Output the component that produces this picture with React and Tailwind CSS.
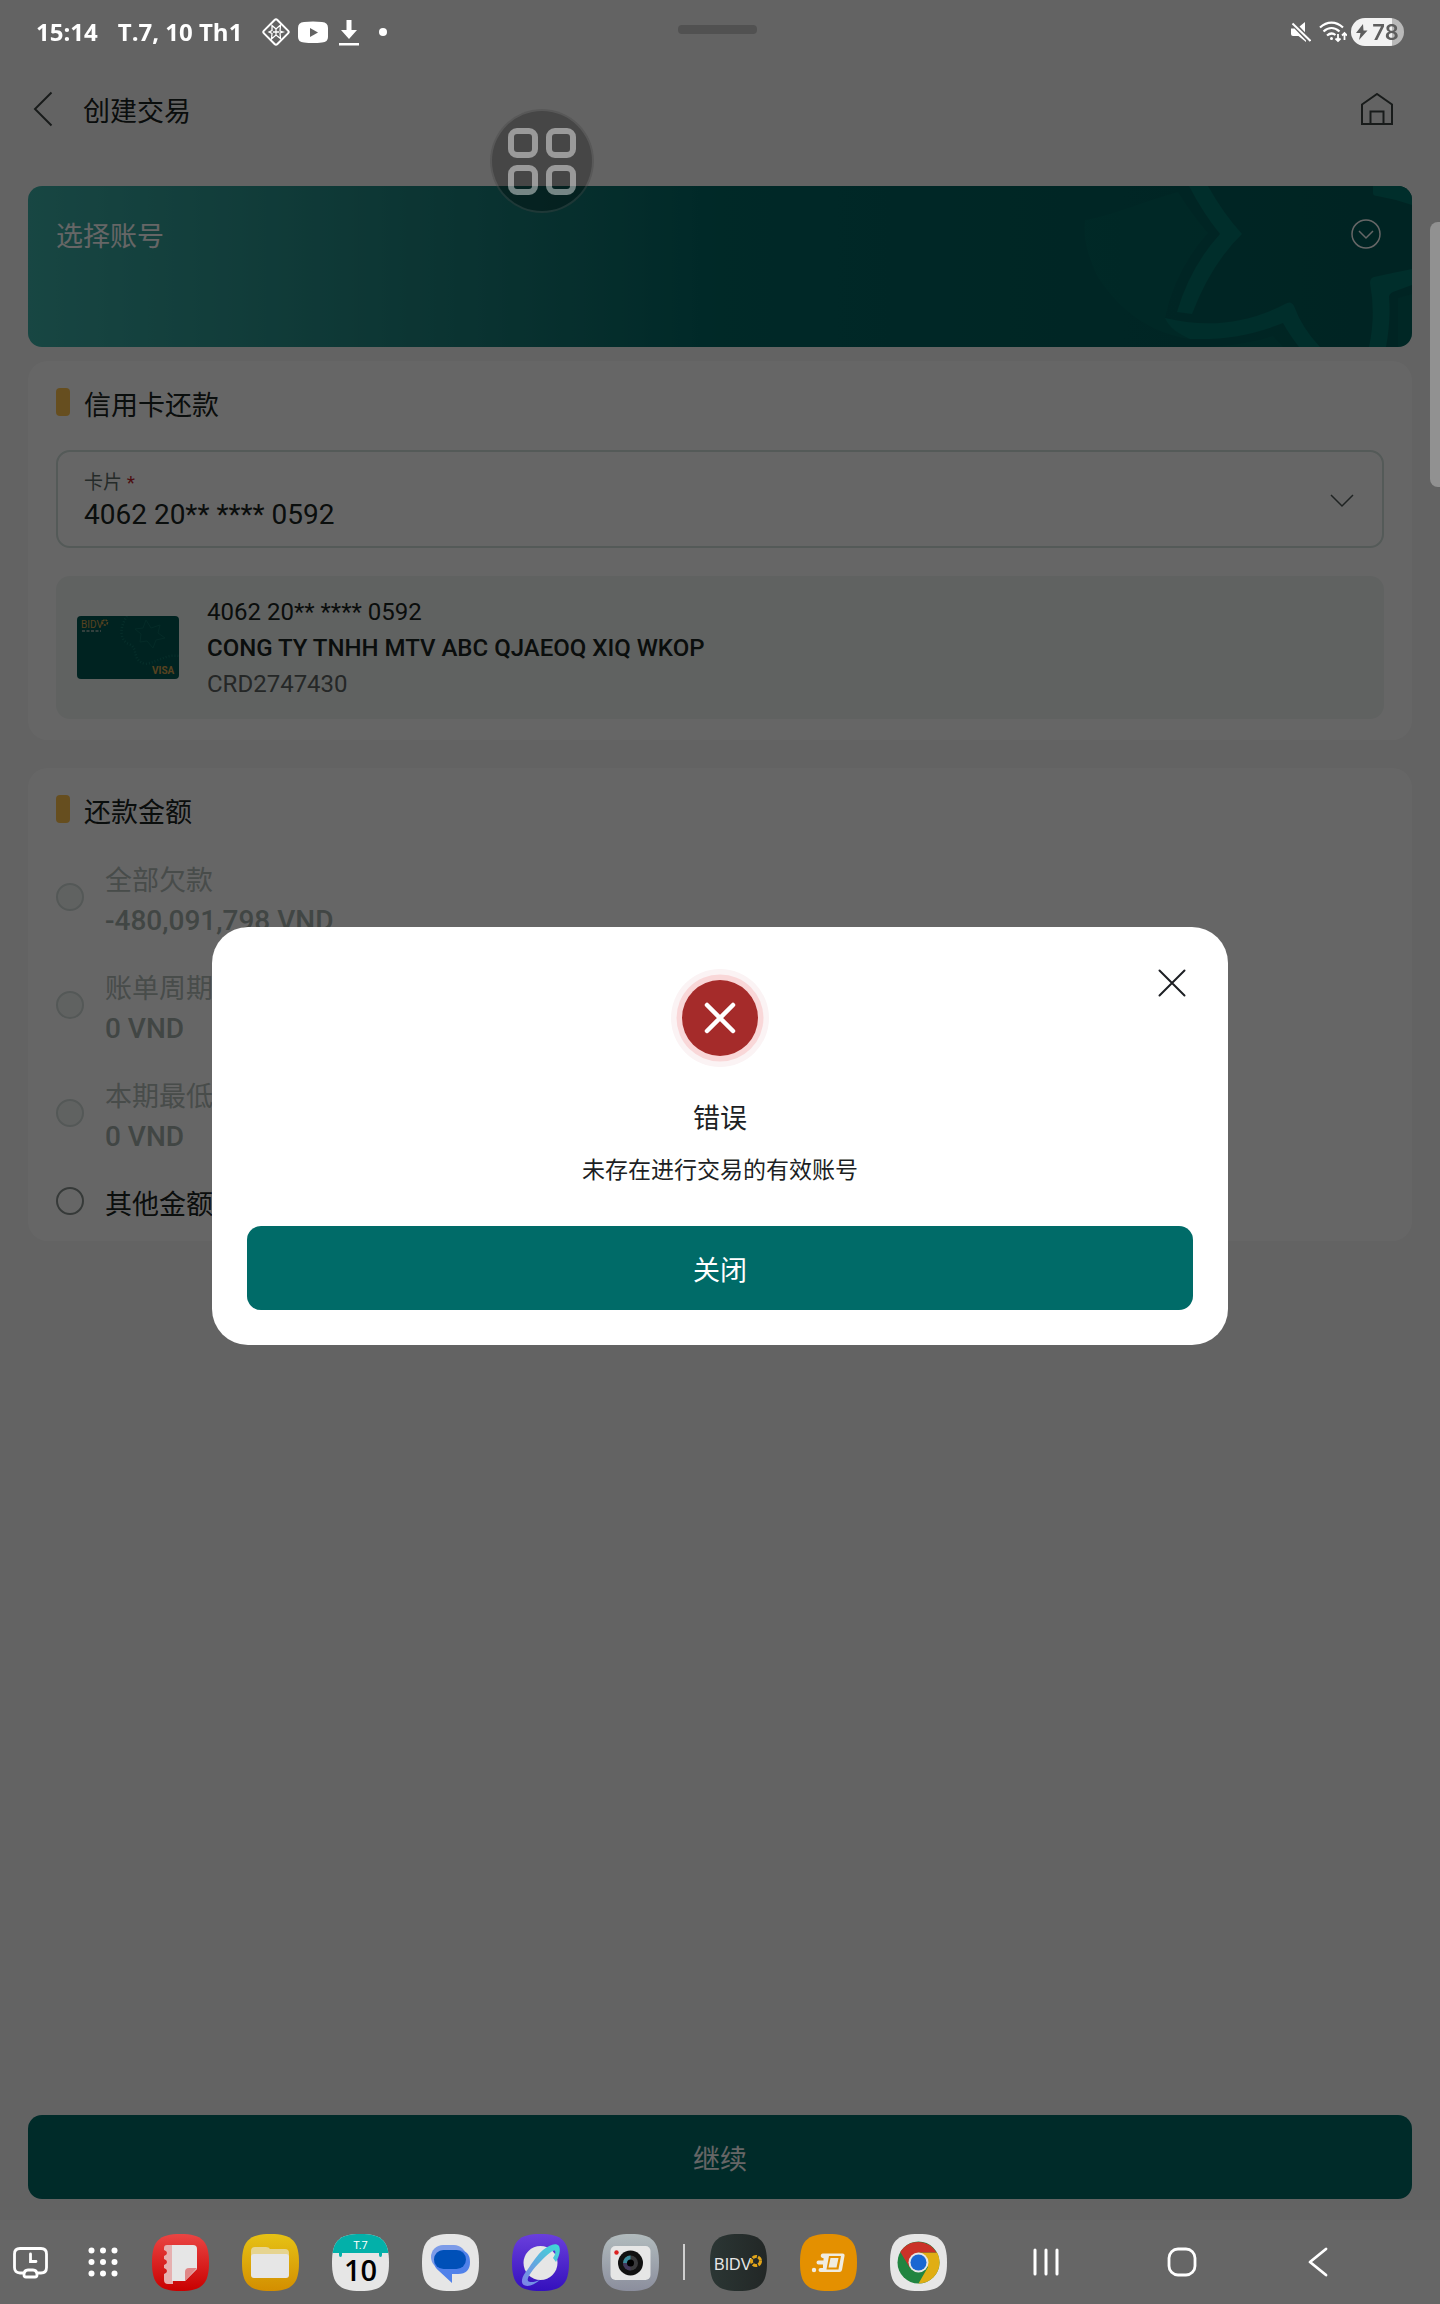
import React, { useState } from "react";

const OPTIONS = [
  { id: "all", label: "全部欠款", amount: "-480,091,798 VND", disabled: true },
  { id: "cycle", label: "账单周期欠款", amount: "0 VND", disabled: true },
  { id: "min", label: "本期最低还款", amount: "0 VND", disabled: true },
  { id: "other", label: "其他金额", disabled: false },
];

const StatusBar = () => (
  <div className="relative z-20 flex h-16 items-center justify-between px-9 text-white">
    <div className="flex items-center font-['Open_Sans',sans-serif] text-[24px] leading-8 font-bold">
      <span>15:14</span>
      <span className="ml-5">T.7, 10 Th1</span>
      <svg className="ml-5 h-7 w-7" viewBox="0 0 28 28" fill="none" stroke="white" strokeWidth="2">
        <rect x="4.500" y="4.500" width="19" height="19" rx="2" transform="rotate(45 14 14)" />
        <path
          d="M10 7.500 14 11l4.500-4-.5 6 3 1-3 1 .5 5.500L14 17l-4.500 4 .5-5.500L7 14l3-1.500zM14 11v6M11 14h6"
          strokeWidth="1.300"
        />
      </svg>
      <svg className="ml-2 h-7 w-[30px]" viewBox="0 0 30 28">
        <path d="M6 4Q15 3 24 4q6 .5 6 6v9q0 5-6 5.500-9 1-18 0-6-.5-6-5.500v-9Q0 4.500 6 4z" fill="white" />
        <path d="M12 10v9l8-4.500z" fill="#636363" />
      </svg>
      <svg className="ml-[11px] h-7 w-5" viewBox="0 0 20 28" fill="white">
        <path d="M7.500 2h5v10H18L10 21 2 12h5.500zM0 25h20v2.500H0z" />
      </svg>
      <span className="ml-5 h-2 w-2 rounded-full bg-white" />
    </div>
    <div className="flex items-center">
      <svg className="h-5 w-5" viewBox="0 0 20 20" fill="white">
        <path d="M0 6.500h3.500L15 18.500V20L7.500 14H2a2 2 0 0 1-2-2zM8.500 4.500 14 0v10.200z" />
        <path d="M1.500 1.500l18 17.500" stroke="white" strokeWidth="2" />
      </svg>
      <svg className="ml-2 h-6 w-7" viewBox="0 0 28 24" fill="none" stroke="white" strokeWidth="2.200">
        <path d="M1 7.500C8 1 17 1 24 7.500M4.500 11.500c5-4.500 11-4.500 16 0M8 15.500c3-2.500 6-2.500 8.500-.5" />
        <circle cx="12.500" cy="18.500" r="1.500" fill="white" stroke="none" />
        <path d="M19 14v7m-2.500-2.500L19 21l2.500-2.500M25.500 20v-7M23 15.500l2.500-2.500 2.500 2.500" strokeWidth="1.800" />
      </svg>
      <div className="ml-1 flex h-7 w-[53px] items-center justify-center rounded-full bg-linear-to-r from-[#f2f2f2] from-78% to-[#b9b9b9] to-78% text-[#5e5e5e]">
        <svg className="h-4 w-3" viewBox="0 0 12 16" fill="currentColor">
          <path d="M7 0 0 9h4.500L3 16l8.500-9.500H7.500z" />
        </svg>
        <span className="ml-1 font-['Inter',sans-serif] text-[22px] leading-7 font-semibold">78</span>
      </div>
    </div>
    <span className="absolute top-[25px] left-[678px] h-[9px] w-[79px] rounded-[4px] bg-[#515151]" />
  </div>
);

const Header = () => (
  <header className="flex h-[122px] items-start justify-between pt-[23px] pr-[45px] pl-[27px]">
    <div className="flex items-start">
      <button className="flex h-11 w-8 items-center justify-center" aria-label="返回">
        <svg className="h-9 w-5" viewBox="0 0 20 36" fill="none" stroke="#3d4543" strokeWidth="2">
          <path d="M18.500 1.500 2 18l16.500 16.500" />
        </svg>
      </button>
      <h1 className="ml-6 pt-[5px] text-[27px] leading-10">创建交易</h1>
    </div>
    <button className="flex h-11 w-9 items-center justify-center" aria-label="首页">
      <svg className="h-8 w-8" viewBox="0 0 32 32" fill="none" stroke="#3d4543" strokeWidth="2">
        <path d="M1 11.500 16 1l15 10.500V31H1zM9.500 31V18.500h13V31" />
      </svg>
    </button>
  </header>
);

const AccountBanner = () => (
  <button className="relative flex h-[161px] w-full items-start justify-between overflow-hidden rounded-[14px] bg-linear-to-r from-[#3cafa7] via-[#006663] via-50% to-[#005a57] px-7 pt-[31px] text-left">
    <svg className="absolute top-0 right-0 h-[161px] w-[355px]" viewBox="0 0 355 161" fill="#00736b">
      <path
        d="M28 34C60 28 90 14 121 6Q136 30 151 47 118 84 108 132 128 139 150 141L133 153C90 147 60 121 40 90 28 64 26 47 28 34z"
        opacity="0.300"
      />
      <path d="M132 0h19Q166 27 185 48 154 78 135 128L120 126Q133 81 163 48 146 27 132 0z" />
      <path d="M108 132c42 10 82 6 120-14q6-4 9 2 8 22 26 41h-21Q232 148 226 137C196 149 170 154 133 153 122 148 112 142 108 132z" />
      <path d="M150 161q40-2 66-11l10 11zM341 112l14-4v53h-14z" opacity="0.300" />
      <path d="M316 0v7q0 3 4 3 18 3 35 9V0zM355 83q-20 4-38 8-4 1-4 6 6 32-1 64h17q5-27 3-50 0-3 4-5l19-7z" />
    </svg>
    <span className="relative text-[27px] leading-10 text-white">选择账号</span>
    <svg className="relative mt-0.5 mr-[3px] h-[30px] w-[30px]" viewBox="0 0 30 30" fill="none" stroke="white" strokeWidth="1.500">
      <circle cx="15" cy="15" r="14" />
      <path d="m8 12 7 7 7-7" />
    </svg>
  </button>
);

const SectionTitle = ({ children }) => (
  <div className="flex items-start">
    <span className="h-7 w-3.5 rounded-[4px] bg-[#ffc34f]" />
    <h2 className="ml-3.5 text-[27px] leading-9">{children}</h2>
  </div>
);

const BankCard = () => (
  <svg className="h-16 w-[102px] shrink-0" viewBox="0 0 102 64">
    <rect width="102" height="63" rx="4" fill="#005853" />
    <path
      d="M50 0C41 14 44 25 52 28 62 32 54 44 68 48 82 46 88 38 102 40"
      fill="none"
      stroke="#0f7268"
      strokeWidth="2.500"
      strokeDasharray="1 2"
    />
    <path
      d="M69 4l5 8 9-3-2 8 7 5-9 2-3 8-6-7-7 1 1-8-6-5 8-1z"
      fill="none"
      stroke="#0c6b62"
      strokeWidth="1"
    />
    <text x="4" y="12" fontSize="10" fill="#d9a650" fontFamily="Roboto, sans-serif">BIDV</text>
    <circle cx="28" cy="6.500" r="2.500" fill="none" stroke="#d9a650" strokeWidth="1.500" strokeDasharray="2 1" />
    <path d="M5 15h19" stroke="#a8b8b0" strokeWidth="1.500" strokeDasharray="3 1.500" />
    <text x="75" y="58" fontSize="10" fontWeight="700" fill="#d9a650" fontFamily="Roboto, sans-serif">VISA</text>
  </svg>
);

const CardSection = () => (
  <section className="mt-3.5 rounded-[20px] bg-white px-7 pt-[27px] pb-[21px]">
    <SectionTitle>信用卡还款</SectionTitle>
    <div className="mt-[26px] flex h-[98px] items-center rounded-[14px] border-2 border-[#d2e0dc] pt-1 pr-7 pl-[26px]">
      <div className="flex-1">
        <label htmlFor="card" className="block text-[19px] leading-7 text-[#5c6b67]">
          卡片 <span className="text-[#c0272d]">*</span>
        </label>
        <select id="card" className="block h-9 w-full appearance-none bg-transparent text-[28px] leading-9">
          <option>4062 20** **** 0592</option>
        </select>
      </div>
      <svg className="h-3.5 w-6" viewBox="0 0 24 14" fill="none" stroke="#4f5956" strokeWidth="1.500">
        <path d="m1 1 11 11L23 1" />
      </svg>
    </div>
    <div className="mt-7 flex h-[143px] items-center rounded-[14px] bg-[#f0f5f3] pl-[21px]">
      <BankCard />
      <div className="ml-7 text-[24px] leading-9">
        <p>4062 20** **** 0592</p>
        <p className="font-medium">CONG TY TNHH MTV ABC QJAEOQ XIQ WKOP</p>
        <p className="text-[#5c6361]">CRD2747430</p>
      </div>
    </div>
  </section>
);

const AmountSection = () => {
  const [selected, setSelected] = useState("");

  return (
    <section className="mt-7 rounded-[20px] bg-white px-7 pt-[27px] pb-4">
      <SectionTitle>还款金额</SectionTitle>
      <div className="mt-[22px] flex flex-col gap-5">
        {OPTIONS.map((option) => (
          <label key={option.id} className="flex items-center gap-[21px]">
            <input
              type="radio"
              name="amount"
              value={option.id}
              disabled={option.disabled}
              checked={selected === option.id}
              onChange={() => setSelected(option.id)}
              className="h-7 w-7 appearance-none rounded-full border-2 border-[#88918e] checked:border-8 disabled:border-[#d2dcd9] disabled:bg-[#f0f5f3]"
            />
            {option.amount ? (
              <span className="pt-2 leading-10 text-[#a3aeab]">
                <span className="block text-[27px] text-[#b3bdba]">{option.label}</span>
                <span className="block text-[28px] font-medium">{option.amount}</span>
              </span>
            ) : (
              <span className="pt-2 text-[27px] leading-10">{option.label}</span>
            )}
          </label>
        ))}
      </div>
    </section>
  );
};

const ErrorDialog = ({ onClose }) => (
  <div className="fixed inset-0 z-10 flex items-center justify-center bg-black/60 pb-8">
    <div
      role="dialog"
      aria-labelledby="dialog-title"
      className="relative flex w-[1016px] max-w-[90%] flex-col items-center rounded-[36px] bg-white px-[35px] pt-[42px] pb-[35px] text-[#1d1f24]"
    >
      <button
        onClick={onClose}
        aria-label="关闭窗口"
        className="absolute top-10 right-10 flex h-8 w-8 items-center justify-center"
      >
        <svg className="h-7 w-7" viewBox="0 0 28 28" fill="none" stroke="#1d1f24" strokeWidth="2" strokeLinecap="round">
          <path d="m1.500 1.500 25 25M26.500 1.500l-25 25" />
        </svg>
      </button>
      <svg className="h-[98px] w-[98px]" viewBox="0 0 98 98">
        <circle cx="49" cy="49" r="49" fill="#fbf3f4" />
        <circle cx="49" cy="49" r="43.500" fill="#f9d7d8" />
        <circle cx="49" cy="49" r="38" fill="#a52b2a" />
        <path d="m36 36 26 26M62 36 36 62" stroke="white" strokeWidth="4.500" strokeLinecap="round" />
      </svg>
      <h2 id="dialog-title" className="mt-8 text-[27px] leading-10">错误</h2>
      <p className="mt-3.5 text-[23px] leading-9">未存在进行交易的有效账号</p>
      <button onClick={onClose} className="mt-[37px] h-[84px] w-full rounded-[14px] bg-[#006b68] pt-1.5 text-[27px] text-white">
        关闭
      </button>
    </div>
  </div>
);

// Rounded "squircle" tile shared by all dock apps
const TILE = "M28.500 0C50 0 57 7 57 28.500S50 57 28.500 57 0 50 0 28.500 7 0 28.500 0z";

const AppIcon = ({ label, fill, children }) => (
  <button aria-label={label} className="h-[57px] w-[57px] shrink-0">
    <svg className="h-[57px] w-[57px]" viewBox="0 0 57 57">
      <defs>
        <linearGradient id="notes" x2="0" y2="1"><stop stopColor="#ea4543" /><stop offset="1" stopColor="#c90000" /></linearGradient>
        <linearGradient id="files" x2="0" y2="1"><stop stopColor="#e6c215" /><stop offset="1" stopColor="#d38e00" /></linearGradient>
        <linearGradient id="web" x2="0" y2="1"><stop stopColor="#6a3fdc" /><stop offset="1" stopColor="#3410bd" /></linearGradient>
        <linearGradient id="cam" x2="0" y2="1"><stop stopColor="#b1bbbd" /><stop offset="1" stopColor="#8b8e9d" /></linearGradient>
        <linearGradient id="bank"><stop stopColor="#2b3634" /><stop offset="1" stopColor="#222726" /></linearGradient>
        <linearGradient id="ring" x1="0" y1="1" x2="1" y2="0"><stop stopColor="#8080e8" /><stop offset="1" stopColor="#3bdcd5" /></linearGradient>
        <clipPath id="tile"><path d={TILE} /></clipPath>
      </defs>
      <path d={TILE} fill={fill} />
      {children}
    </svg>
  </button>
);

const Dock = () => (
  <nav className="relative z-20 flex h-[84px] items-center justify-between bg-[#666666] pr-[107px] pl-3">
    <div className="flex items-center">
      <button aria-label="最近" className="h-9 w-9">
        <svg className="h-9 w-9" viewBox="0 0 36 36" fill="none" stroke="white" strokeWidth="2.800" strokeLinecap="round">
          <path d="M11 29H8q-5.500 0-5.500-5.500V10Q2.500 4.500 8 4.500h21q5.500 0 5.500 5.500v13.500q0 5.500-5.500 5.500h-3" />
          <path d="M12 31q0-5 4-5h5q4 0 4 5 0 2-2 2h-9q-2 0-2-2zM18.500 10v7.500H24" />
        </svg>
      </button>
      <button aria-label="应用" className="ml-10 h-[30px] w-[30px]">
        <svg className="h-[30px] w-[30px]" viewBox="0 0 30 30" fill="white">
          {[3.5, 15, 26.5].map((y) =>
            [3.5, 15, 26.5].map((x) => <circle key={x + "-" + y} cx={x} cy={y} r="3" />)
          )}
        </svg>
      </button>
      <div className="ml-[34px] flex items-center gap-[33px]">
        <AppIcon label="Notes" fill="url(#notes)">
          <path d="M17 11h-2q-3 0-3 3v2q3 1 3 3t-3 3v3q3 1 3 3t-3 3v3q3 1 3 3t-3 3v6q0 4 4 4h5V11z" fill="#e6b0b0" />
          <path d="M20 11h21q4 0 4 4v20L33 47H20z" fill="#e6e6e6" />
          <path d="M45 34H37q-4 0-4 4v9z" fill="#e08787" />
        </AppIcon>
        <AppIcon label="Files" fill="url(#files)">
          <path d="M9 17q0-4 4-4h11q3 0 4 2h15q4 0 4 4v6H9z" fill="#e6d490" />
          <rect x="9" y="20" width="38" height="24" rx="3" fill="#e6e6e6" />
        </AppIcon>
        <AppIcon label="Calendar" fill="#e6e6e6">
          <path d="M0 0h57v19H50v2q0 2-1.500 2T47 21v-2H10v2q0 2-1.500 2T7 21v-2H0z" fill="#03b0a9" clipPath="url(#tile)" />
          <text x="28.500" y="15" textAnchor="middle" fontSize="11" fill="white" fontFamily="Roboto, sans-serif">T.7</text>
          <text x="28.500" y="47" textAnchor="middle" fontSize="29" fontWeight="600" fill="black" fontFamily="Open Sans, sans-serif">10</text>
        </AppIcon>
        <AppIcon label="Messages" fill="#e6e6e6">
          <rect x="9" y="11" width="35" height="24" rx="12" fill="#7c9be8" />
          <path d="M12 28q0-12 12-12h12q12 0 12 12 0 12-12 12h-6v9L17 37q-5-4-5-9z" fill="#5081ea" />
          <rect x="12" y="16" width="32" height="19" rx="9.500" fill="#0050b8" />
        </AppIcon>
        <AppIcon label="Internet" fill="url(#web)">
          <circle cx="28.500" cy="29" r="17" fill="#e6e6e6" />
          <path
            d="M16 35C9 43 8 50 13 51.500 17 53 23 50 28 46 23 48 18 49 16 47 14 44 21 35 29 27 36 20 42 15 43 17 44 18 43 21 41 24 L44 28C47 23 49 16 47 12 44 8 37 11 31 16 26 20 20 29 16 35z"
            fill="url(#ring)"
          />
        </AppIcon>
        <AppIcon label="Camera" fill="url(#cam)">
          <rect x="8.500" y="12" width="40" height="34" rx="5" fill="#e6e6e6" />
          <circle cx="14.500" cy="18.500" r="2.200" fill="#dc2020" />
          <circle cx="28.500" cy="29" r="12.500" fill="#111" />
          <circle cx="28.500" cy="29" r="7.500" fill="#3a3a3c" />
          <path d="M28.500 21.500A7.500 7.500 0 0 0 21 29h7.500z" fill="#3b8b9c" />
          <path d="M21 29a7.500 7.500 0 0 0 7.500 7.500V29z" fill="#42385c" />
          <circle cx="28.500" cy="29" r="3.500" fill="black" />
        </AppIcon>
      </div>
      <span className="ml-6 h-9 w-0.5 bg-[#cfcfcf]" />
      <div className="ml-[25px] flex items-center gap-[33px]">
        <AppIcon label="BIDV" fill="url(#bank)">
          <text x="4" y="36" fontSize="16" fontWeight="500" fill="#e6e6e6" fontFamily="Liberation Sans, sans-serif">BIDV</text>
          <circle cx="46" cy="27" r="4.500" fill="none" stroke="#e2a519" strokeWidth="3" strokeDasharray="4.500 1.200" />
        </AppIcon>
        <AppIcon label="Orders" fill="#e49000">
          <path
            d="M23.500 19.500h19q2.500 0 2 2.500l-2.500 14q-.5 2-2.500 2h-19a2 2 0 0 1 0-4h2.500v-3.500h-4.500a2 2 0 0 1 0-4h5V24h-1a2 2 0 0 1 1-4.500z"
            fill="#f0ece0"
          />
          <path d="M29 22h12l-2.500 13.500h-12z" fill="#e49000" />
          <path d="M30.500 24h8l-2 9.500h-8z" fill="#f0ece0" />
          <circle cx="14" cy="36" r="2.200" fill="#f0ece0" />
        </AppIcon>
        <AppIcon label="Chrome" fill="#e6e6e6">
          <circle cx="28.500" cy="28.500" r="21" fill="#218440" />
          <path d="M28.500 18.500h18.500A21 21 0 0 1 28.500 49.500L38 33z" fill="#e0ae14" />
          <path d="M10.300 18 20 34l8.500-15.500h18A21 21 0 0 0 10.300 18z" fill="#ca3228" />
          <circle cx="28.500" cy="28.500" r="10" fill="#e6e6e6" />
          <circle cx="28.500" cy="28.500" r="8" fill="#1967d2" />
        </AppIcon>
      </div>
    </div>
    <div className="flex items-center gap-[106px]">
      <button aria-label="Recents" className="h-[30px] w-[30px]">
        <svg className="h-[30px] w-[30px]" viewBox="0 0 30 30" stroke="white" strokeWidth="3" strokeLinecap="round">
          <path d="M4 3v24M15 3v24M26 3v24" />
        </svg>
      </button>
      <button aria-label="Home" className="h-[30px] w-[30px]">
        <svg className="h-[30px] w-[30px]" viewBox="0 0 30 30" fill="none" stroke="white" strokeWidth="2.800">
          <rect x="2" y="2" width="26" height="26" rx="9" />
        </svg>
      </button>
      <button aria-label="Back" className="h-[30px] w-[30px]">
        <svg className="h-[30px] w-[30px]" viewBox="0 0 30 30" fill="none" stroke="white" strokeWidth="2.800" strokeLinecap="round" strokeLinejoin="round">
          <path d="M23 2 7 15l16 13" />
        </svg>
      </button>
    </div>
  </nav>
);

const App = () => {
  const [open, setOpen] = useState(true);

  return (
    <div className="flex min-h-screen flex-col bg-[#f8f8f8] font-['Roboto','Noto_Sans_CJK_SC',sans-serif] text-[#1a2321]">
      <StatusBar />
      <Header />
      <main className="flex-1 px-7">
        <AccountBanner />
        <CardSection />
        <AmountSection />
      </main>
      <footer className="px-7 pt-7 pb-[21px]">
        <button className="h-[84px] w-full rounded-[14px] bg-[#006b68] pt-1.5 text-[27px] text-white">继续</button>
      </footer>
      <Dock />

      {open && <ErrorDialog onClose={() => setOpen(false)} />}

      {/* Floating assistant button */}
      <button
        aria-label="助手"
        className="fixed top-[109px] left-[490px] z-30 grid h-[104px] w-[104px] grid-cols-2 place-content-center place-items-center gap-[7px] rounded-full border-2 border-white/10 bg-black/30 px-4"
      >
        <span className="h-[30px] w-[30px] rounded-[9px] border-6 border-white/45" />
        <span className="h-[30px] w-[30px] rounded-[9px] border-6 border-white/45" />
        <span className="h-[30px] w-[30px] rounded-[9px] border-6 border-white/45" />
        <span className="h-[30px] w-[30px] rounded-[9px] border-6 border-white/45" />
      </button>

      {/* Edge panel handle */}
      <span className="fixed top-[222px] right-0 z-30 h-[265px] w-2.5 rounded-l-lg bg-[#919191]" />
    </div>
  );
};

export default App;
